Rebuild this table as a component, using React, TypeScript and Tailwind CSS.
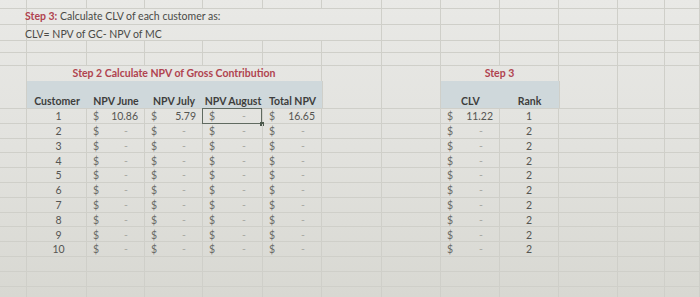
import React from "react";

const COLS = "grid grid-cols-[27px_60px_58px_58px_60px_59px_60px_59px_59px_59px_59px_47px_35px]";
const LINE = "border-[#cfcfc9]";
const font = { fontFamily: "Lato, 'Open Sans', sans-serif" };

function Blank({ n }: { n: number }) {
  return (
    <>
      {Array.from({ length: n }).map((_, i) => (
        <div key={i} className={`border-r ${LINE}`} />
      ))}
    </>
  );
}

function Money({ v, selected }: { v: string | null; selected?: boolean }) {
  return (
    <div className={`relative flex items-end justify-between border-r ${LINE} pb-[1px] text-[10.5px] leading-none`}>
      <span className="pl-[6px] text-[#6a6a66]">$</span>
      {v ? (
        <span className="pr-[6px] text-[#555552]">{v}</span>
      ) : (
        <span className="pr-[16px] text-[#a8a8a3]">-</span>
      )}
      {selected && (
        <div className="absolute -left-[1px] -top-[1px] -bottom-[1px] right-[0px] border-[1.5px] border-[#606a60]">
          <div className="absolute -bottom-[3px] -right-[3px] h-[4px] w-[4px] bg-[#4d5a4d]" />
        </div>
      )}
    </div>
  );
}

const rows: { c: string; june: string | null; july: string | null; aug: string | null; total: string | null; clv: string | null; rank: string }[] = [
  { c: "1", june: "10.86", july: "5.79", aug: null, total: "16.65", clv: "11.22", rank: "1" },
  ...["2", "3", "4", "5", "6", "7", "8", "9", "10"].map((c) => ({
    c,
    june: null,
    july: null,
    aug: null,
    total: null,
    clv: null,
    rank: "2",
  })),
];

export default function App() {
  return (
    <div
      className="h-[297px] w-[700px] overflow-hidden bg-gradient-to-b from-[#e9e9e6] via-[#e2e2de] to-[#d8d8d2]"
      style={font}
    >
      {/* r0 */}
      <div className={`${COLS} h-[9px] border-b ${LINE}`}>
        <Blank n={13} />
      </div>
      {/* r1 */}
      <div className={`${COLS} h-[16px] border-b ${LINE}`}>
        <div className={`border-r ${LINE}`} />
        <div className="col-span-5 flex items-center pl-0 text-[10.5px] leading-none text-[#4a4a47] -ml-[2px] whitespace-nowrap">
          <span className="font-bold text-[#b0434f]">Step 3:</span>&nbsp;Calculate CLV of each customer as:
        </div>
        <Blank n={7} />
      </div>
      {/* r2 */}
      <div className={`${COLS} h-[16px] border-b ${LINE}`}>
        <div className={`border-r ${LINE}`} />
        <div className="col-span-5 flex items-end pb-[1px] text-[10.5px] leading-none text-[#4a4a47] -ml-[2px] whitespace-nowrap">
          CLV= NPV of GC- NPV of MC
        </div>
        <Blank n={7} />
      </div>
      {/* r3 */}
      <div className={`${COLS} h-[12px] border-b ${LINE}`}>
        <Blank n={13} />
      </div>
      {/* r4 */}
      <div className={`${COLS} h-[13px] border-b ${LINE}`}>
        <Blank n={13} />
      </div>
      {/* r5 titles */}
      <div className={`${COLS} h-[15px]`}>
        <div className={`border-r ${LINE}`} />
        <div className={`col-span-5 flex items-center justify-center border-r ${LINE} text-[10.5px] font-bold leading-none text-[#b0434f] whitespace-nowrap`}>
          Step 2 Calculate NPV of Gross Contribution
        </div>
        <Blank n={2} />
        <div className={`col-span-2 flex items-center justify-center border-r ${LINE} text-[10.5px] font-bold leading-none text-[#b0434f]`}>
          Step 3
        </div>
        <Blank n={3} />
      </div>
      {/* r6 header band */}
      <div className={`${COLS} h-[28px] border-b ${LINE}`}>
        <div className={`border-r ${LINE}`} />
        {["Customer", "NPV June", "NPV July", "NPV August", "Total NPV"].map((h) => (
          <div
            key={h}
            className="flex items-end justify-center bg-[#cfd8db] pb-[2px] text-[10.5px] font-bold leading-none text-[#3e3e3c] whitespace-nowrap"
          >
            {h}
          </div>
        ))}
        <div className={`border-r border-l ${LINE}`} />
        <div className={`border-r ${LINE}`} />
        {["CLV", "Rank"].map((h) => (
          <div
            key={h}
            className="flex items-end justify-center bg-[#cfd8db] pb-[2px] text-[10.5px] font-bold leading-none text-[#3e3e3c]"
          >
            {h}
          </div>
        ))}
        <div className={`border-l border-r ${LINE}`} />
        <Blank n={2} />
      </div>
      {/* data */}
      {rows.map((r, i) => (
        <div key={r.c} className={`${COLS} h-[14.8px] border-b ${LINE}`}>
          <div className={`border-r ${LINE}`} />
          <div className={`flex items-end justify-center border-r ${LINE} pb-[1px] pl-[4px] text-[10.5px] leading-none text-[#555552]`}>
            {r.c}
          </div>
          <Money v={r.june} />
          <Money v={r.july} />
          <Money v={r.aug} selected={i === 0} />
          <Money v={r.total} />
          <Blank n={2} />
          <Money v={r.clv} />
          <div className={`flex items-end justify-center border-r ${LINE} pb-[1px] text-[10.5px] leading-none text-[#555552]`}>
            {r.rank}
          </div>
          <Blank n={3} />
        </div>
      ))}
      {[0, 1, 2].map((k) => (
        <div key={k} className={`${COLS} h-[14.8px] border-b ${LINE}`}>
          <Blank n={13} />
        </div>
      ))}
    </div>
  );
}
